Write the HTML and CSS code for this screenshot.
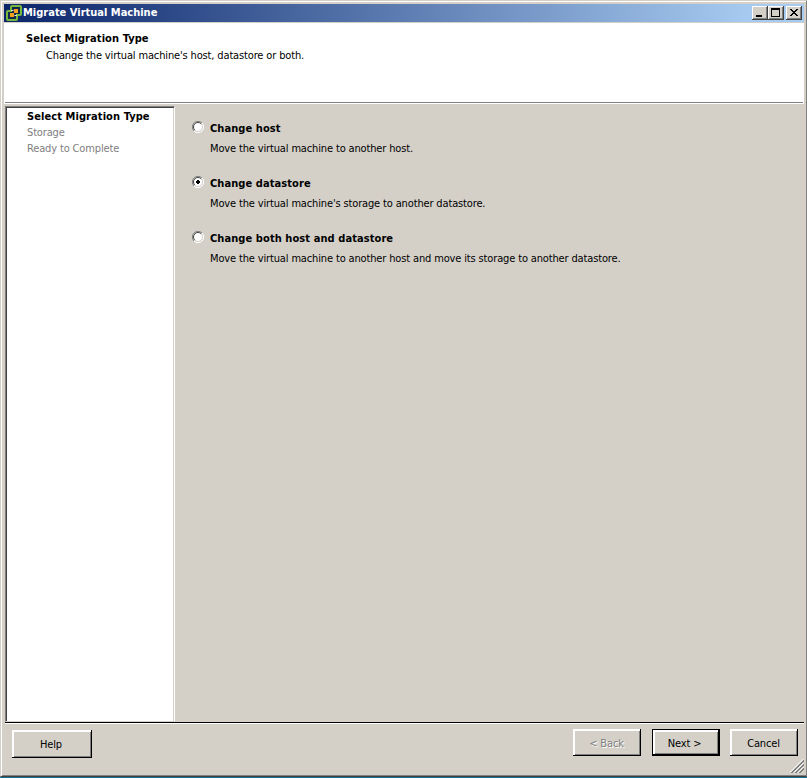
FILE: index.html
```
<!DOCTYPE html>
<html lang="en">
<head>
<meta charset="utf-8">
<title>Migrate Virtual Machine</title>
<link rel="stylesheet" href="styles.css">
</head>
<body>
<div class="window">
  <header class="titlebar">
    <svg class="app-icon" width="16" height="16" viewBox="0 0 16 16"><path d="M6 1h8q1 0 1 1v7q0 1-1 1h-3v4q0 1-1 1H2q-1 0-1-1V7q0-1 1-1h3V2q0-1 1-1z" fill="#14284c" stroke="#76b83b" stroke-width="2"/><path d="M8 4h4v4H8zM4 8h4v4H4z" fill="#f5a11c"/><path d="M5.5 6v-.5h2M10.5 9.5v1h-2" fill="none" stroke="#e5edf0"/></svg>
    <h1>Migrate Virtual Machine</h1>
    <div class="caption-buttons">
      <button class="cap" aria-label="Minimize"><svg width="16" height="14" shape-rendering="crispEdges"><path d="M4 9h6v2H4z"/></svg></button>
      <button class="cap" aria-label="Maximize"><svg width="16" height="14" shape-rendering="crispEdges"><path fill-rule="evenodd" d="M3 2h9v9H3zM4 4h7v6H4z"/></svg></button>
      <button class="cap close" aria-label="Close"><svg width="16" height="14" shape-rendering="crispEdges"><path d="M4 3h2v1h1v1h2V4h1V3h2v1h-1v1h-1v1H9v1h1v1h1v1h1v1h-2V9H9V8H7v1H6v1H4V9h1V8h1V7h1V6H6V5H5V4H4z"/></svg></button>
    </div>
  </header>
  <section class="banner">
    <h2>Select Migration Type</h2>
    <p>Change the virtual machine's host, datastore or both.</p>
  </section>
  <main class="body">
    <nav class="steps">
      <b>Select Migration Type</b>
      <span>Storage</span>
      <span>Ready to Complete</span>
    </nav>
    <div class="options">
      <label class="option">
        <svg class="radio" width="12" height="12"><circle cx="6" cy="6" r="5" fill="#fff"/><path d="M2 10A5.5 5.5 0 0 1 10 2" fill="none" stroke="#808080"/><path d="M2.8 9.2A4.5 4.5 0 0 1 9.2 2.8" fill="none" stroke="#404040"/><path d="M10 2A5.5 5.5 0 0 1 2 10" fill="none" stroke="#fff"/><path d="M9.2 2.8A4.5 4.5 0 0 1 2.8 9.2" fill="none" stroke="#d4d0c8"/></svg>
        <span class="copy"><b>Change host</b><span>Move the virtual machine to another host.</span></span>
      </label>
      <label class="option">
        <svg class="radio" width="12" height="12"><circle cx="6" cy="6" r="5" fill="#fff"/><path d="M2 10A5.5 5.5 0 0 1 10 2" fill="none" stroke="#808080"/><path d="M2.8 9.2A4.5 4.5 0 0 1 9.2 2.8" fill="none" stroke="#404040"/><path d="M10 2A5.5 5.5 0 0 1 2 10" fill="none" stroke="#fff"/><path d="M9.2 2.8A4.5 4.5 0 0 1 2.8 9.2" fill="none" stroke="#d4d0c8"/><path d="M5 4h2v1h1v2H7v1H5V7H4V5h1z"/></svg>
        <span class="copy"><b>Change datastore</b><span>Move the virtual machine's storage to another datastore.</span></span>
      </label>
      <label class="option">
        <svg class="radio" width="12" height="12"><circle cx="6" cy="6" r="5" fill="#fff"/><path d="M2 10A5.5 5.5 0 0 1 10 2" fill="none" stroke="#808080"/><path d="M2.8 9.2A4.5 4.5 0 0 1 9.2 2.8" fill="none" stroke="#404040"/><path d="M10 2A5.5 5.5 0 0 1 2 10" fill="none" stroke="#fff"/><path d="M9.2 2.8A4.5 4.5 0 0 1 2.8 9.2" fill="none" stroke="#d4d0c8"/></svg>
        <span class="copy"><b>Change both host and datastore</b><span>Move the virtual machine to another host and move its storage to another datastore.</span></span>
      </label>
    </div>
  </main>
  <footer class="footer">
    <button class="btn help">Help</button>
    <button class="btn back" disabled>&lt; Back</button>
    <button class="btn next">Next &gt;</button>
    <button class="btn cancel">Cancel</button>
    <svg class="grip" width="14" height="14"><path d="M0 13.5L13.5 0M4 13.5L13.5 4M8 13.5L13.5 8" stroke="#fff"/><path d="M1 14L14 1M2 14L14 2M5 14L14 5M6 14L14 6M9 14L14 9M10 14L14 10" stroke="#808080"/></svg>
  </footer>
</div>
</body>
</html>
```
FILE: styles.css
```
* { box-sizing: border-box; }
html, body { margin: 0; height: 100%; overflow: hidden; }
body {
  background: #1a7191; color: #000; letter-spacing: -0.145px;
  font: 11px/16px "DejaVu Sans Condensed", "DejaVu Sans", sans-serif;
}
h1, h2, p { margin: 0; font-size: 11px; white-space: nowrap; }
h1, h2, b { font-weight: bold; letter-spacing: 0.08px; }
p { font-weight: normal; }
span { white-space: nowrap; }
.window {
  width: 807px; height: 777px; padding: 3px 2px 1px 3px;
  display: flex; flex-direction: column;
  background: #d4d0c8;
  border: 1px solid #d4d0c8; border-right-color: #808080; border-bottom-color: #404040;
  box-shadow: inset 1px 1px #fff, inset 0 -1px #808080;
}
.titlebar {
  height: 18px; flex: none; display: flex; align-items: center;
  padding: 0 2px; background: linear-gradient(90deg, #0a246a, #a6caf0 745px);
}
.app-icon { flex: none; margin-right: 1px; }
.titlebar h1 { color: #fff; line-height: 18px; flex: 1; letter-spacing: 0; }
.caption-buttons { display: flex; }
.cap {
  width: 16px; height: 14px; padding: 0; border: 0; display: block; background: #d4d0c8;
  box-shadow: inset -1px -1px #404040, inset 1px 1px #fff, inset -2px -2px #808080;
}
.cap svg { display: block; }
.close { margin-left: 2px; }
.banner {
  height: 80px; flex: none; margin-top: 1px; padding: 8px 22px;
  background: linear-gradient(#808080, #808080) 1px 79px / 798px 1px no-repeat #fff;
}
.banner p { padding-left: 20px; margin-top: 1px; }
.body { height: 619px; flex: none; display: flex; padding: 2px 0 0 1px; border-top: 1px solid #fff; }
.steps {
  width: 170px; height: 616px; flex: none; display: flex; flex-direction: column; padding: 2px 0 0 21px;
  background: #fff; color: #808080; border: 1px solid; border-color: #808080 #fff #d4d0c8 #808080;
  box-shadow: inset 1px 1px #404040, inset -1px 0 #d4d0c8;
}
.steps b { color: #000; }
.steps > * { height: 16px; }
.options { padding: 15px 0 0 17px; }
.option { display: flex; height: 55px; }
.radio { flex: none; margin: 0 6px 0 0; }
.copy { display: flex; flex-direction: column; gap: 4px; }
.footer {
  position: relative; height: 53px; flex: none; display: flex; align-items: flex-start;
  margin-left: 1px; padding: 6px 6px 0 7px; border-top: 1px solid #000; box-shadow: inset 0 1px #fff;
}
.btn {
  width: 68px; height: 27px; padding: 2px 1px 0 0; font: inherit; letter-spacing: inherit;
  color: #000; background: #d4d0c8; border: 0;
  box-shadow: inset -1px -1px #000, inset 2px 2px #fff, inset -2px -2px #808080;
}
.help { width: 80px; height: 28px; margin: 1px auto 0 0; padding-right: 2px; }
.back { color: #808080; text-shadow: 1px 1px #fff; margin-right: 11px; }
.next { margin-right: 10px; padding-right: 3px; border: 1px solid #000; }
.grip { position: absolute; right: 0; bottom: 2px; }
```
